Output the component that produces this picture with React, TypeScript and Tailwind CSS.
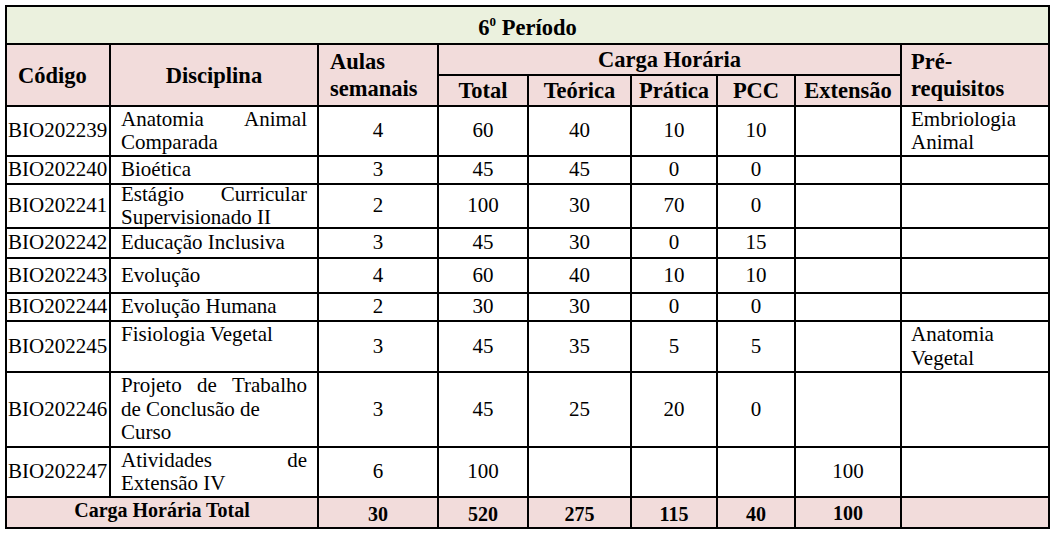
import React from "react";

type Row = {
  code: string;
  name: React.ReactNode;
  aulas: string;
  total: string;
  teo: string;
  pra: string;
  pcc: string;
  ext: string;
  pre: React.ReactNode;
};

const rows: Row[] = [
  { code: "BIO202239", name: "Anatomia Animal Comparada", aulas: "4", total: "60", teo: "40", pra: "10", pcc: "10", ext: "", pre: <>Embriologia<br />Animal</> },
  { code: "BIO202240", name: "Bioética", aulas: "3", total: "45", teo: "45", pra: "0", pcc: "0", ext: "", pre: "" },
  { code: "BIO202241", name: "Estágio Curricular Supervisionado II", aulas: "2", total: "100", teo: "30", pra: "70", pcc: "0", ext: "", pre: "" },
  { code: "BIO202242", name: "Educação Inclusiva", aulas: "3", total: "45", teo: "30", pra: "0", pcc: "15", ext: "", pre: "" },
  { code: "BIO202243", name: "Evolução", aulas: "4", total: "60", teo: "40", pra: "10", pcc: "10", ext: "", pre: "" },
  { code: "BIO202244", name: "Evolução Humana", aulas: "2", total: "30", teo: "30", pra: "0", pcc: "0", ext: "", pre: "" },
  { code: "BIO202245", name: <>Fisiologia Vegetal<br />&nbsp;</>, aulas: "3", total: "45", teo: "35", pra: "5", pcc: "5", ext: "", pre: <>Anatomia<br />Vegetal</> },
  { code: "BIO202246", name: <>Projeto de Trabalho de Conclusão de<br />Curso</>, aulas: "3", total: "45", teo: "25", pra: "20", pcc: "0", ext: "", pre: "" },
  { code: "BIO202247", name: "Atividades de Extensão IV", aulas: "6", total: "100", teo: "", pra: "", pcc: "", ext: "100", pre: "" },
];

const cell = "bg-white flex items-center";
const num = "bg-white flex items-center justify-center";
const head = "bg-[#F2DCDB] font-bold text-[22.5px] leading-[27px]";
const tot = "bg-[#F2DCDB] flex justify-center font-bold text-[20px] leading-[24px]";

export default function App() {
  return (
    <div className="w-[1056px] h-[535px] bg-white pt-[5px] pl-[5px] text-black font-['Liberation_Serif','Times_New_Roman',serif]">
      <div className="grid w-[1045px] bg-black p-[2px] gap-[2px] grid-cols-[102px_206px_118px_88px_101px_84px_76px_104px_146px] grid-rows-[36px_29px_29px_48px_26px_42px_28px_33px_26px_49px_73px_48px_29px] text-[21px] leading-[23.5px] font-['Liberation_Serif','Times_New_Roman',serif]">
        <div className="col-span-9 bg-[#EBF1DE] flex items-center justify-center font-bold text-[22.5px]">
          <span>
            6<span className="text-[13px] align-[9px]">0</span> Período
          </span>
        </div>

        <div className={`${head} row-span-2 flex items-center pl-[11px]`}>Código</div>
        <div className={`${head} row-span-2 flex items-center justify-center`}>Disciplina</div>
        <div className={`${head} row-span-2 flex items-center pl-[11px]`}>
          <span>Aulas<br />semanais</span>
        </div>
        <div className={`${head} col-span-5 flex items-center justify-center`}>Carga Horária</div>
        <div className={`${head} row-span-2 flex items-center pl-[9px]`}>
          <span>Pré-<br />requisitos</span>
        </div>
        <div className={`${head} flex items-center justify-center`}>Total</div>
        <div className={`${head} flex items-center justify-center`}>Teórica</div>
        <div className={`${head} flex items-center justify-center`}>Prática</div>
        <div className={`${head} flex items-center justify-center`}>PCC</div>
        <div className={`${head} flex items-center justify-center`}>Extensão</div>

        {rows.map((r) => (
          <React.Fragment key={r.code}>
            <div className={`${cell} pl-[1px] whitespace-nowrap`}>{r.code}</div>
            <div className={`${cell} px-[10px]`}>
              <div className="w-full text-justify">{r.name}</div>
            </div>
            <div className={num}>{r.aulas}</div>
            <div className={num}>{r.total}</div>
            <div className={num}>{r.teo}</div>
            <div className={num}>{r.pra}</div>
            <div className={num}>{r.pcc}</div>
            <div className={num}>{r.ext}</div>
            <div className={`${cell} pl-[9px]`}>
              <div>{r.pre}</div>
            </div>
          </React.Fragment>
        ))}

        <div className={`${tot} col-span-2 items-start`}>Carga Horária Total</div>
        <div className={`${tot} items-end pb-[1px]`}>30</div>
        <div className={`${tot} items-end pb-[1px]`}>520</div>
        <div className={`${tot} items-end pb-[1px]`}>275</div>
        <div className={`${tot} items-end pb-[1px]`}>115</div>
        <div className={`${tot} items-end pb-[1px]`}>40</div>
        <div className={`${tot} items-center`}>100</div>
        <div className="bg-[#F2DCDB]"></div>
      </div>
    </div>
  );
}
